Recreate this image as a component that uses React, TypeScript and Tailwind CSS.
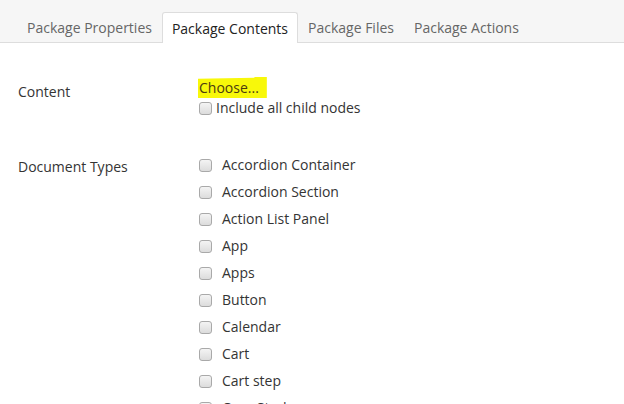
import { useState } from "react";

const tabs = ["Package Properties", "Package Contents", "Package Files", "Package Actions"];

const docTypes = [
  "Accordion Container",
  "Accordion Section",
  "Action List Panel",
  "App",
  "Apps",
  "Button",
  "Calendar",
  "Cart",
  "Cart step",
  "Case Study",
];

function Box() {
  return (
    <span className="inline-block h-[13px] w-[13px] shrink-0 rounded-[3px] border border-[#a9a9a9] bg-gradient-to-b from-[#f4f4f4] to-[#dcdcdc]" />
  );
}

export default function App() {
  const [active] = useState(1);

  return (
    <div
      className="h-[404px] w-[624px] overflow-hidden bg-white text-[14px] text-[#343434]"
      style={{ fontFamily: '"Open Sans", "Noto Sans", sans-serif' }}
    >
      {/* tabs */}
      <div className="flex h-[43px] items-end border-b border-[#dddddd] bg-[#f6f6f6] pl-[17px]">
        {tabs.map((t, i) => (
          <div
            key={t}
            className={
              i === active
                ? "-mb-px flex h-[31px] items-center rounded-t-[3px] border border-b-0 border-[#dddddd] bg-white px-[9px] text-[#222]"
                : "flex h-[30px] items-center px-[10px] text-[#666]"
            }
          >
            {t}
          </div>
        ))}
      </div>

      {/* content row */}
      <div className="flex pl-[18px] pt-[34px]">
        <div className="w-[180px] pt-[5px] leading-[20px]">Content</div>
        <div className="flex flex-col">
          <span className="w-fit bg-[#f8f80a] pl-px pr-[8px] pt-[1px] leading-[20px] text-[#4a3a10] [clip-path:polygon(0_8%,82%_4%,82%_0,100%_0,100%_100%,0_100%)]">
            Choose...
          </span>
          <label className="flex items-center gap-[4px] pl-px leading-[20px]">
            <Box />
            <span>Include all child nodes</span>
          </label>
        </div>
      </div>

      {/* document types */}
      <div className="flex pl-[18px] pt-[38px]">
        <div className="w-[181px] pt-[1px] leading-[20px]">Document Types</div>
        <div className="mt-[3px] flex flex-col">
          {docTypes.map((d) => (
            <label key={d} className="flex h-[27px] items-start gap-[10px] leading-[20px]">
              <Box />
              <span className="-mt-[4px]">{d}</span>
            </label>
          ))}
        </div>
      </div>
    </div>
  );
}
